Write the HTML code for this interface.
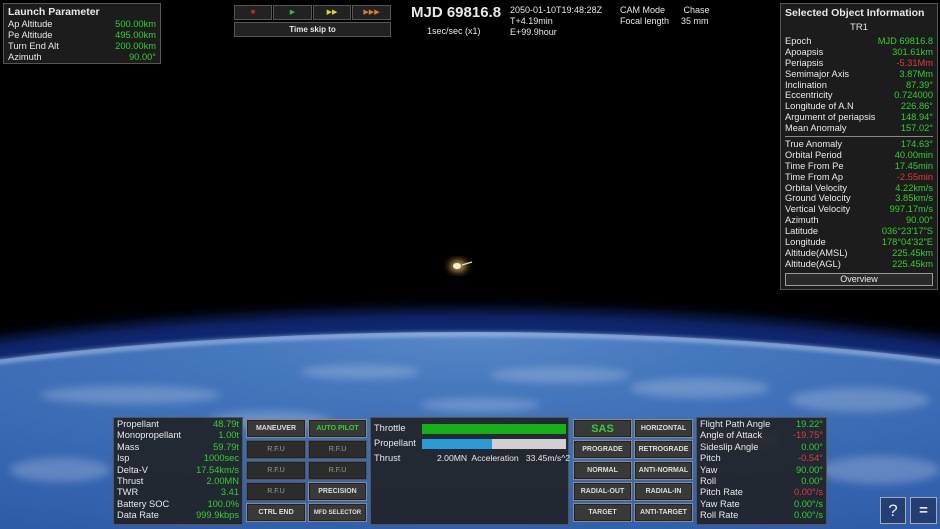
<!DOCTYPE html>
<html><head><meta charset="utf-8"><style>
*{margin:0;padding:0;box-sizing:border-box}
html,body{width:940px;height:529px;overflow:hidden}
body{background:#000;font-family:"Liberation Sans",sans-serif;color:#e8e8e8;position:relative}
.a{position:absolute}
.pan{position:absolute;background:rgba(32,32,32,.88);border:1px solid #555}
.row{display:flex;justify-content:space-between;font-size:9.3px;line-height:10.9px;height:10.9px;white-space:nowrap}
.g{color:#2ed12e}.r{color:#e03a3a}
.btn{position:absolute;background:#393937;border:1px solid #8a8a85;color:#ddd;font-size:7px;font-weight:bold;display:flex;align-items:center;justify-content:center;box-shadow:inset 0 0 0 1px #222}
.btn.g{color:#2ed12e}
.dim{color:#999;font-weight:normal;border-color:#555;background:#2c2c2b}
.t{font-size:9.3px;position:absolute;white-space:nowrap}
</style></head><body>
<svg class="a" style="left:0;top:0" width="940" height="529">
<defs>
<radialGradient id="e" cx="0.5" cy="0" r="1">
<stop offset="0" stop-color="#5a88c8"/><stop offset="0.12" stop-color="#4678bd"/><stop offset="0.5" stop-color="#2d5aa8"/><stop offset="1" stop-color="#1d4390"/></radialGradient>
<filter id="b" x="-20%" y="-20%" width="140%" height="140%"><feGaussianBlur stdDeviation="7"/></filter>
<filter id="b2" x="-20%" y="-20%" width="140%" height="140%"><feGaussianBlur stdDeviation="2.5"/></filter>
<filter id="b3" x="-50%" y="-50%" width="200%" height="200%"><feGaussianBlur stdDeviation="4"/></filter>
</defs>
<ellipse cx="470" cy="565" rx="1015" ry="255" fill="#1838a0" filter="url(#b)" opacity="0.7"/>
<ellipse cx="470" cy="565" rx="1000" ry="233" fill="url(#e)"/>
<ellipse cx="470" cy="567" rx="1000" ry="233" fill="none" stroke="#c5d8f0" stroke-width="3" filter="url(#b2)" opacity="0.85"/>
<g fill="#d0dcec" opacity="0.28" filter="url(#b3)">
<ellipse cx="130" cy="395" rx="90" ry="9"/><ellipse cx="360" cy="372" rx="60" ry="7"/><ellipse cx="560" cy="375" rx="70" ry="8"/><ellipse cx="700" cy="388" rx="70" ry="10"/><ellipse cx="860" cy="400" rx="70" ry="12"/><ellipse cx="60" cy="470" rx="50" ry="12"/><ellipse cx="270" cy="420" rx="60" ry="9"/><ellipse cx="480" cy="405" rx="60" ry="7"/><ellipse cx="880" cy="470" rx="60" ry="14"/><ellipse cx="740" cy="440" rx="40" ry="10"/>
</g>
<ellipse cx="458" cy="266" rx="8" ry="5" fill="#ffc860" filter="url(#b3)"/>
<ellipse cx="457" cy="266" rx="4" ry="3" fill="#fff2cc"/>
<line x1="462" y1="265" x2="472" y2="262" stroke="#ddd" stroke-width="1.3"/>
</svg>

<div class="pan" style="left:3px;top:3px;width:158px;height:61px;padding:2px 4px">
<div style="font-size:10.5px;font-weight:bold;line-height:13px">Launch Parameter</div>
<div class="row"><span>Ap Altitude</span><span class="g">500.00km</span></div>
<div class="row"><span>Pe Altitude</span><span class="g">495.00km</span></div>
<div class="row"><span>Turn End Alt</span><span class="g">200.00km</span></div>
<div class="row"><span>Azimuth</span><span class="g">90.00°</span></div>
</div>

<div class="pan" style="left:234px;top:5px;width:38px;height:15px;background:#222;font-size:7px;color:#e02020;text-align:center;line-height:13px">■</div>
<div class="pan" style="left:273px;top:5px;width:39px;height:15px;background:#222;font-size:7px;color:#2ec02e;text-align:center;line-height:13px">▶</div>
<div class="pan" style="left:313px;top:5px;width:38px;height:15px;background:#222;font-size:7px;color:#d8d830;text-align:center;line-height:13px">▶▶</div>
<div class="pan" style="left:352px;top:5px;width:39px;height:15px;background:#222;font-size:7px;color:#e07a30;text-align:center;line-height:13px">▶▶▶</div>
<div class="pan" style="left:234px;top:22px;width:157px;height:15px;background:#222;font-size:8px;font-weight:bold;text-align:center;line-height:13px">Time skip to</div>

<div class="t" style="left:411px;top:4px;font-size:15px;font-weight:bold">MJD 69816.8</div>
<div class="t" style="left:427px;top:26px;font-size:9px">1sec/sec (x1)</div>
<div class="t" style="left:510px;top:5px;font-size:9px;line-height:11px">2050-01-10T19:48:28Z<br>T+4.19min<br>E+99.9hour</div>
<div class="t" style="left:620px;top:5px;font-size:9px;line-height:11px">CAM Mode<br>Focal length</div>
<div class="t" style="left:681px;top:5px;font-size:9px;line-height:11px">&nbsp;Chase<br>35 mm</div>

<div class="pan" style="left:780px;top:3px;width:158px;height:287px;padding:2px 4px">
<div style="font-size:10.5px;font-weight:bold;line-height:14px">Selected Object Information</div>
<div style="font-size:9.5px;text-align:center;line-height:16px">TR1</div>
<div class="row"><span>Epoch</span><span class="g">MJD 69816.8</span></div>
<div class="row"><span>Apoapsis</span><span class="g">301.61km</span></div>
<div class="row"><span>Periapsis</span><span class="r">-5.31Mm</span></div>
<div class="row"><span>Semimajor Axis</span><span class="g">3.87Mm</span></div>
<div class="row"><span>Inclination</span><span class="g">87.39°</span></div>
<div class="row"><span>Eccentricity</span><span class="g">0.724000</span></div>
<div class="row"><span>Longitude of A.N</span><span class="g">226.86°</span></div>
<div class="row"><span>Argument of periapsis</span><span class="g">148.94°</span></div>
<div class="row"><span>Mean Anomaly</span><span class="g">157.02°</span></div>
<div style="border-top:1px solid #888;margin:2px 0 2px"></div>
<div class="row"><span>True Anomaly</span><span class="g">174.63°</span></div>
<div class="row"><span>Orbital Period</span><span class="g">40.00min</span></div>
<div class="row"><span>Time From Pe</span><span class="g">17.45min</span></div>
<div class="row"><span>Time From Ap</span><span class="r">-2.55min</span></div>
<div class="row"><span>Orbital Velocity</span><span class="g">4.22km/s</span></div>
<div class="row"><span>Ground Velocity</span><span class="g">3.85km/s</span></div>
<div class="row"><span>Vertical Velocity</span><span class="g">997.17m/s</span></div>
<div class="row"><span>Azimuth</span><span class="g">90.00°</span></div>
<div class="row"><span>Latitude</span><span class="g">036°23'17"S</span></div>
<div class="row"><span>Longitude</span><span class="g">178°04'32"E</span></div>
<div class="row"><span>Altitude(AMSL)</span><span class="g">225.45km</span></div>
<div class="row"><span>Altitude(AGL)</span><span class="g">225.45km</span></div>
<div style="margin-top:3px;border:1px solid #999;background:#2a2a2a;text-align:center;font-size:9px;line-height:11px">Overview</div>
</div>

<div class="pan" style="left:113px;top:417px;width:130px;height:108px;padding:1px 3px">
<div class="row" style="height:11.4px"><span>Propellant</span><span class="g">48.79t</span></div>
<div class="row" style="height:11.4px"><span>Monopropellant</span><span class="g">1.00t</span></div>
<div class="row" style="height:11.4px"><span>Mass</span><span class="g">59.79t</span></div>
<div class="row" style="height:11.4px"><span>Isp</span><span class="g">1000sec</span></div>
<div class="row" style="height:11.4px"><span>Delta-V</span><span class="g">17.54km/s</span></div>
<div class="row" style="height:11.4px"><span>Thrust</span><span class="g">2.00MN</span></div>
<div class="row" style="height:11.4px"><span>TWR</span><span class="g">3.41</span></div>
<div class="row" style="height:11.4px"><span>Battery SOC</span><span class="g">100.0%</span></div>
<div class="row" style="height:11.4px"><span>Data Rate</span><span class="g">999.9kbps</span></div>
</div>

<div class="btn" style="left:246px;top:419px;width:60px;height:19px">MANEUVER</div>
<div class="btn g" style="left:308px;top:419px;width:59px;height:19px">AUTO PILOT</div>
<div class="btn dim" style="left:246px;top:440px;width:60px;height:19px">R.F.U</div>
<div class="btn dim" style="left:308px;top:440px;width:59px;height:19px">R.F.U</div>
<div class="btn dim" style="left:246px;top:461px;width:60px;height:19px">R.F.U</div>
<div class="btn dim" style="left:308px;top:461px;width:59px;height:19px">R.F.U</div>
<div class="btn dim" style="left:246px;top:482px;width:60px;height:19px">R.F.U</div>
<div class="btn" style="left:308px;top:482px;width:59px;height:19px">PRECISION</div>
<div class="btn" style="left:246px;top:503px;width:60px;height:19px">CTRL END</div>
<div class="btn" style="left:308px;top:503px;width:59px;height:19px;font-size:6px">MFD SELECTOR</div>

<div class="pan" style="left:370px;top:417px;width:199px;height:108px">
<div class="t" style="left:3px;top:5px">Throttle</div>
<div class="a" style="left:51px;top:6px;width:144px;height:10px;background:#18b018"></div>
<div class="t" style="left:3px;top:20px">Propellant</div>
<div class="a" style="left:51px;top:21px;width:144px;height:10px;background:#d0d0d0"></div>
<div class="a" style="left:51px;top:21px;width:70px;height:10px;background:#2a9ad8"></div>
<div class="t" style="left:3px;top:35px">Thrust</div>
<div class="t" style="left:66px;top:35px;font-size:8.6px">2.00MN&nbsp; Acceleration&nbsp;&nbsp; 33.45m/s^2</div>
</div>

<div class="btn g" style="left:573px;top:419px;width:59px;height:19px;font-size:11px">SAS</div>
<div class="btn" style="left:634px;top:419px;width:59px;height:19px">HORIZONTAL</div>
<div class="btn" style="left:573px;top:440px;width:59px;height:19px">PROGRADE</div>
<div class="btn" style="left:634px;top:440px;width:59px;height:19px">RETROGRADE</div>
<div class="btn" style="left:573px;top:461px;width:59px;height:19px">NORMAL</div>
<div class="btn" style="left:634px;top:461px;width:59px;height:19px">ANTI-NORMAL</div>
<div class="btn" style="left:573px;top:482px;width:59px;height:19px">RADIAL-OUT</div>
<div class="btn" style="left:634px;top:482px;width:59px;height:19px">RADIAL-IN</div>
<div class="btn" style="left:573px;top:503px;width:59px;height:19px">TARGET</div>
<div class="btn" style="left:634px;top:503px;width:59px;height:19px">ANTI-TARGET</div>

<div class="pan" style="left:696px;top:417px;width:131px;height:108px;padding:1px 3px">
<div class="row" style="height:11.4px"><span>Flight Path Angle</span><span class="g">19.22°</span></div>
<div class="row" style="height:11.4px"><span>Angle of Attack</span><span class="r">-19.75°</span></div>
<div class="row" style="height:11.4px"><span>Sideslip Angle</span><span class="g">0.00°</span></div>
<div class="row" style="height:11.4px"><span>Pitch</span><span class="r">-0.54°</span></div>
<div class="row" style="height:11.4px"><span>Yaw</span><span class="g">90.00°</span></div>
<div class="row" style="height:11.4px"><span>Roll</span><span class="g">0.00°</span></div>
<div class="row" style="height:11.4px"><span>Pitch Rate</span><span class="r">0.00°/s</span></div>
<div class="row" style="height:11.4px"><span>Yaw Rate</span><span class="g">0.00°/s</span></div>
<div class="row" style="height:11.4px"><span>Roll Rate</span><span class="g">0.00°/s</span></div>
</div>

<div class="a" style="left:880px;top:497px;width:26px;height:27px;border:1px solid #aaa;background:rgba(20,30,60,.5);font-size:17px;text-align:center;line-height:25px">?</div>
<div class="a" style="left:910px;top:497px;width:27px;height:27px;border:1px solid #aaa;background:rgba(20,30,60,.5);font-size:15px;font-weight:bold;text-align:center;line-height:25px">=</div>
</body></html>
